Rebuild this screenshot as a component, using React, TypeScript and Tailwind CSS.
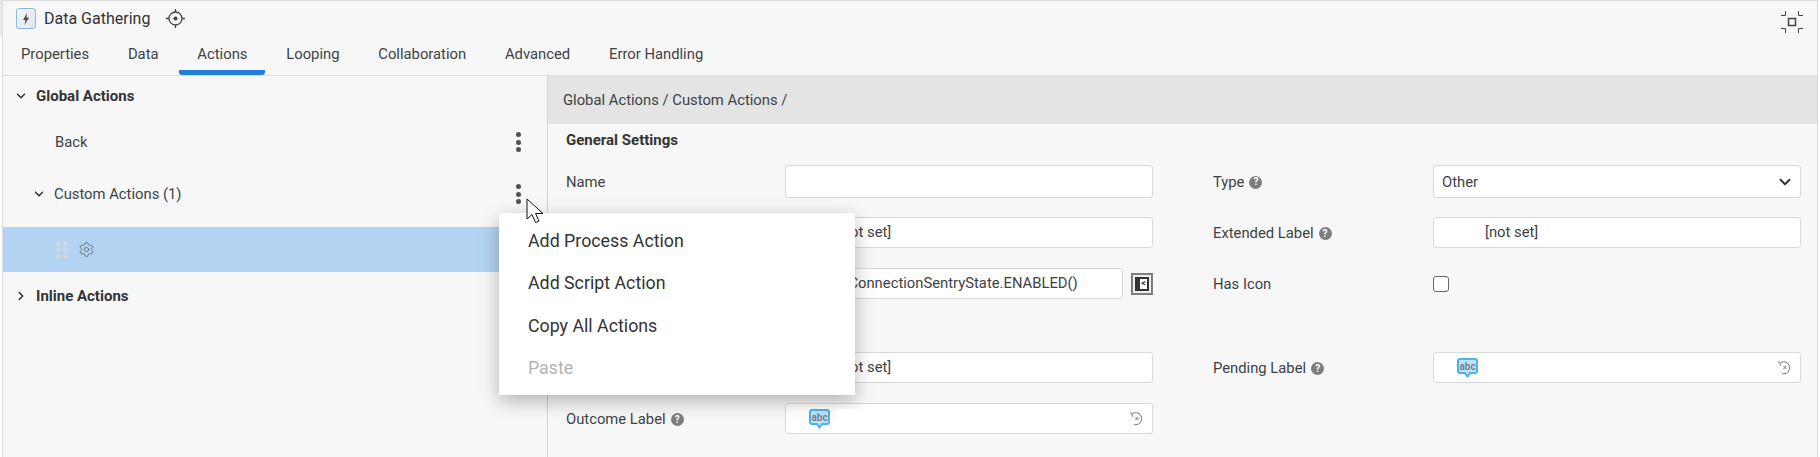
import { ChevronDown, ChevronRight, Settings } from 'lucide-react'

const tabs = ['Properties', 'Data', 'Actions', 'Looping', 'Collaboration', 'Advanced', 'Error Handling']

function Kebab() {
  return (
    <div className="flex flex-col gap-[2.5px] mr-[26px]">
      <span className="w-[5px] h-[5px] rounded-full bg-[#4f5358]" />
      <span className="w-[5px] h-[5px] rounded-full bg-[#4f5358]" />
      <span className="w-[5px] h-[5px] rounded-full bg-[#4f5358]" />
    </div>
  )
}

function Help() {
  return (
    <span className="inline-flex items-center justify-center w-[13px] h-[13px] rounded-full bg-[#7d7d7d] text-white text-[10px] font-bold leading-none ml-[5px] shrink-0">
      ?
    </span>
  )
}

function Field({ label, help }: { label: string; help?: boolean }) {
  return (
    <div className="flex items-center pt-[2px] text-[14.8px] text-[#3d4246]">
      {label}
      {help && <Help />}
    </div>
  )
}

function AbcIcon() {
  return (
    <svg width="21" height="20" viewBox="0 0 21 20" className="shrink-0">
      <path d="M3 1h15a2 2 0 0 1 2 2v10a2 2 0 0 1-2 2h-5l-2.500 3.500L8 15H3a2 2 0 0 1-2-2V3a2 2 0 0 1 2-2z" fill="#bfe2f6" stroke="#4fb3ea" strokeWidth="2" />
      <text x="10.500" y="11.500" textAnchor="middle" fontSize="10" fontWeight="700" fontFamily="Roboto, sans-serif" fill="#75838f">abc</text>
    </svg>
  )
}

function ResetIcon() {
  return (
    <svg width="15" height="15" viewBox="0 0 15 15" fill="none" stroke="#777" strokeWidth="1" className="shrink-0">
      <path d="M2.800 3.200A6 6 0 1 1 5 13.500" />
      <path d="M1 1.500l1.800 1.700.9 2.600" />
      <path d="M6.500 6l2.800 3M9.300 6L6.500 9" />
    </svg>
  )
}

function LabelInput({ children, className }: { children?: React.ReactNode; className?: string }) {
  return (
    <div className={`flex items-center bg-white border border-[#d8d8d8] rounded-[3px] text-[14.8px] text-[#3d4246] ${className ?? ''}`}>
      {children}
    </div>
  )
}

export default function App() {
  return (
    <div className="relative w-[1820px] h-[457px] overflow-hidden bg-white font-['Roboto',sans-serif] pl-[2px] pr-[2px]">
      <div className="absolute left-0 top-0 w-[2px] h-[36px] bg-[#e8e8e8]" />
      <div className="h-full flex flex-col bg-[#f7f7f7] border-l border-t border-r border-[#dcdcdc]">
        <div className="h-[35px] flex items-center shrink-0 pl-[13px] pr-[14px]">
          <div className="w-[20px] h-[21px] rounded-[3px] border border-[#8fb8e4] bg-gradient-to-br from-[#f4f7fb] to-[#dde6f1] flex items-center justify-center">
            <svg width="8" height="12" viewBox="0 0 8 12">
              <path d="M5 0L1 7h2.500L2.500 12 7 4.500H4.500z" fill="#4a4a4a" />
            </svg>
          </div>
          <span className="ml-[8px] text-[16px] text-[#333]">Data Gathering</span>
          <svg width="19" height="19" viewBox="0 0 19 19" fill="none" stroke="#444" strokeWidth="1.300" className="ml-[16px]">
            <circle cx="9.500" cy="9.500" r="6.500" />
            <circle cx="9.500" cy="9.500" r="2" fill="#444" stroke="none" />
            <path d="M9.500 0v3M9.500 16v3M0 9.500h3M16 9.500h3" />
          </svg>
          <svg width="22" height="22" viewBox="0 0 22 22" fill="none" stroke="#444" strokeWidth="1" className="ml-auto mt-[6px]">
            <path d="M4.500 0v4.500H0M17.500 0v4.500H22M4.500 22v-4.500H0M17.500 22v-4.500H22" />
            <rect x="7.500" y="7.500" width="7" height="7" strokeWidth="1.500" />
          </svg>
        </div>

        <div className="h-[40px] flex gap-[2.8px] shrink-0 border-b border-[#dcdcdc]">
          {tabs.map((t) => (
            <div key={t} className="flex flex-col px-[18px] relative">
              <div className="flex-1 flex items-center text-[14.8px] text-[#3d4246] pb-[2px]">{t}</div>
              {t === 'Actions' && (
                <div className="absolute left-0 right-0 bottom-0 h-[5px] bg-[#1f7fdb] rounded-b-[3px]" />
              )}
            </div>
          ))}
        </div>

        <div className="flex-1 flex min-h-0">
          <div className="w-[545px] shrink-0 border-r border-[#d4d4d4]">
            <div className="h-[40px] flex items-center pl-[11px] text-[15px] font-bold text-[#333]">
              <ChevronDown size={14} strokeWidth={2.200} className="text-[#222]" />
              <span className="ml-[8px]">Global Actions</span>
            </div>
            <div className="h-[52px] flex items-center justify-between pl-[52px] text-[14.8px] text-[#3d4246]">
              <span>Back</span>
              <Kebab />
            </div>
            <div className="h-[52px] flex items-center justify-between pl-[29px] text-[14.8px] text-[#3d4246]">
              <div className="flex items-center">
                <ChevronDown size={14} strokeWidth={2.200} className="text-[#222]" />
                <span className="ml-[8px]">Custom Actions (1)</span>
              </div>
              <Kebab />
            </div>
            <div className="mt-[7px] h-[45px] bg-[#b3d3f2] flex items-center pl-[53px]">
              <div className="grid grid-cols-2 gap-x-[1.500px] gap-y-[1.500px]">
                {[0, 1, 2, 3, 4, 5].map((i) => (
                  <span key={i} className="w-[5px] h-[5px] rounded-full bg-[#cfd6de]" />
                ))}
              </div>
              <Settings size={17} strokeWidth={1} className="ml-[10px] text-[#555]" />
            </div>
            <div className="mt-[4px] h-[40px] flex items-center pl-[11px] text-[15px] font-bold text-[#333]">
              <ChevronRight size={14} strokeWidth={2.200} className="text-[#222]" />
              <span className="ml-[8px]">Inline Actions</span>
            </div>
          </div>

          <div className="flex-1 min-w-0">
            <div className="h-[48px] bg-[#e3e4e3] flex items-center pl-[15px] text-[14.8px] text-[#3d4246]">
              Global Actions / Custom Actions /
            </div>
            <div className="h-[32px] mb-[9px] flex items-center pl-[18px] text-[15px] font-bold text-[#333]">General Settings</div>
            <div className="grid grid-cols-[219px_368px_60px_220px_368px] grid-rows-[32px_31px_31px_13px_31px_31px] pl-[18px] gap-y-[20px]">
              <Field label="Name" />
              <LabelInput className="h-[33px]" />
              <div />
              <Field label="Type" help />
              <LabelInput className="h-[33px] justify-between pl-[8px] pr-[6px]">
                <span className="pt-[2px]">Other</span>
                <ChevronDown size={18} strokeWidth={2.500} className="text-[#333]" />
              </LabelInput>

              <Field label="Label" help />
              <LabelInput className="pl-[52px]">[not set]</LabelInput>
              <div />
              <Field label="Extended Label" help />
              <LabelInput className="pl-[51px]">[not set]</LabelInput>

              <Field label="Enabled" help />
              <div className="flex items-center gap-[8px]">
                <LabelInput className="flex-1 h-full pl-[10px] whitespace-nowrap overflow-hidden">
                  actions.ConnectionSentryState.ENABLED()
                </LabelInput>
                <div className="w-[22px] h-[22px] border-2 border-[#7a7f85] bg-[#eee] p-[2px]">
                  <div className="w-full h-full border-2 border-l-[5px] border-[#333] bg-white flex items-center justify-center text-[9px] font-bold leading-none text-[#222]">
                    &lt;
                  </div>
                </div>
              </div>
              <div />
              <Field label="Has Icon" />
              <div className="flex items-center">
                <div className="w-[16px] h-[16px] bg-white border border-[#666] rounded-[3px]" />
              </div>

              <div className="col-span-5" />

              <Field label="Process Label" help />
              <LabelInput className="pl-[52px]">[not set]</LabelInput>
              <div />
              <Field label="Pending Label" help />
              <LabelInput className="justify-between pl-[23px] pr-[8px]">
                <AbcIcon />
                <ResetIcon />
              </LabelInput>

              <Field label="Outcome Label" help />
              <LabelInput className="pl-[23px] pr-[8px]">
                <AbcIcon />
                <div className="relative z-20 flex-1 h-[20px] ml-[6px] mr-[6px] bg-white" />
                <ResetIcon />
              </LabelInput>
            </div>
          </div>
        </div>
      </div>

      <div className="absolute z-10 left-[499px] top-[213px] w-[356px] h-[182px] bg-white shadow-[0_6px_18px_rgba(0,0,0,0.28)] flex flex-col justify-center pl-[29px] pt-[2px] text-[17.8px] text-[#333]">
        <div className="h-[42.500px] flex items-center">Add Process Action</div>
        <div className="h-[42.500px] flex items-center">Add Script Action</div>
        <div className="h-[42.500px] flex items-center">Copy All Actions</div>
        <div className="h-[42.500px] flex items-center text-[#b3b3b3]">Paste</div>
      </div>

      <svg width="18" height="27" viewBox="0 0 18 27" className="absolute z-30 left-[526px] top-[198px]">
        <path d="M1 1v20l5-4.500 3.500 8 3.500-1.500-3.500-7.500H17z" fill="#fff" stroke="#111" strokeWidth="1" />
      </svg>
    </div>
  )
}
